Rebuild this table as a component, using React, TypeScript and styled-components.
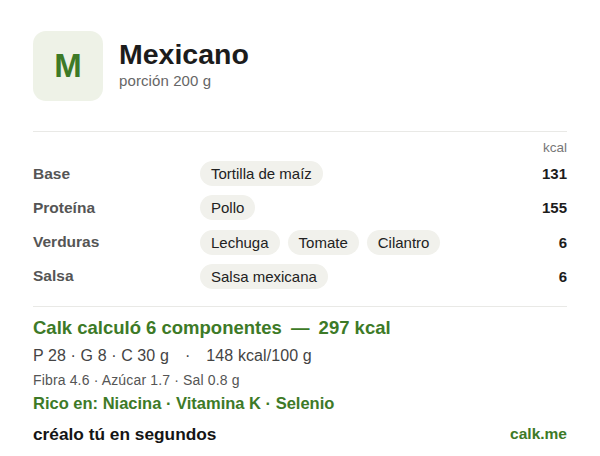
import React from "react";
import styled, { createGlobalStyle } from "styled-components";

const Global = createGlobalStyle`
  html, body { margin: 0; padding: 0; background: #ffffff; }
  body { font-family: "Liberation Sans", Arial, sans-serif; }
`;

const Card = styled.div`
  width: 600px;
  box-sizing: border-box;
  padding: 31px 33px 0 33px;
  background: #fff;
`;

const Header = styled.div`
  display: flex;
  align-items: flex-start;
  gap: 16px;
`;

const Logo = styled.div`
  width: 70px;
  height: 70px;
  border-radius: 13px;
  background: #eef2e7;
  color: #3d7a27;
  font-weight: 700;
  font-size: 33px;
  display: flex;
  align-items: center;
  justify-content: center;
`;

const TitleBlock = styled.div`
  display: flex;
  flex-direction: column;
  padding-top: 7px;
`;

const Title = styled.div`
  font-size: 28.5px;
  font-weight: 700;
  color: #1c1c1c;
  line-height: 32px;
`;

const Subtitle = styled.div`
  font-size: 15px;
  color: #666;
  line-height: 20px;
  margin-top: 1px;
  letter-spacing: 0.1px;
`;

const Divider = styled.div<{ $top: number; $bottom: number }>`
  height: 1px;
  background: #e9e9e6;
  margin-top: ${(p) => p.$top}px;
  margin-bottom: ${(p) => p.$bottom}px;
`;

const KcalHead = styled.div`
  text-align: right;
  font-size: 13.5px;
  color: #777;
  line-height: 16px;
`;

const Table = styled.div`
  display: flex;
  flex-direction: column;
  gap: 10.3px;
  margin-top: 5px;
`;

const Row = styled.div`
  display: grid;
  grid-template-columns: 167px 1fr auto;
  align-items: center;
  height: 24px;
`;

const Label = styled.div`
  font-size: 15.5px;
  font-weight: 700;
  color: #555;
`;

const Chips = styled.div`
  display: flex;
  gap: 8px;
`;

const Chip = styled.span`
  background: #f1f1ec;
  border-radius: 13px;
  padding: 0 11px;
  height: 25px;
  line-height: 25px;
  font-size: 15px;
  color: #222;
`;

const Kcal = styled.div`
  font-size: 15px;
  font-weight: 700;
  color: #1c1c1c;
  text-align: right;
`;

const Summary = styled.div`
  font-size: 18.5px;
  font-weight: 700;
  color: #3d7a27;
  line-height: 22px;
`;

const Dash = styled.span`
  margin: 0 4px;
`;

const Macros = styled.div`
  font-size: 16px;
  color: #444;
  line-height: 20px;
  margin-top: 7px;
  letter-spacing: 0.1px;
`;

const Sep = styled.span`
  margin: 0 16px;
`;

const Micro = styled.div`
  font-size: 14px;
  color: #555;
  line-height: 18px;
  margin-top: 5px;
  letter-spacing: 0.15px;
`;

const Rich = styled.div`
  font-size: 16.5px;
  font-weight: 700;
  color: #3d7a27;
  line-height: 20px;
  margin-top: 4px;
`;

const Footer = styled.div`
  display: flex;
  justify-content: space-between;
  align-items: center;
  margin-top: 10px;
  line-height: 22px;
`;

const Cta = styled.div`
  font-size: 17.3px;
  font-weight: 700;
  color: #151515;
`;

const Brand = styled.div`
  font-size: 15.5px;
  font-weight: 700;
  color: #3d7a27;
`;

const rows = [
  { label: "Base", items: ["Tortilla de maíz"], kcal: 131 },
  { label: "Proteína", items: ["Pollo"], kcal: 155 },
  { label: "Verduras", items: ["Lechuga", "Tomate", "Cilantro"], kcal: 6 },
  { label: "Salsa", items: ["Salsa mexicana"], kcal: 6 },
];

export default function App() {
  return (
    <>
      <Global />
      <Card>
        <Header>
          <Logo>M</Logo>
          <TitleBlock>
            <Title>Mexicano</Title>
            <Subtitle>porción 200 g</Subtitle>
          </TitleBlock>
        </Header>
        <Divider $top={30} $bottom={8} />
        <KcalHead>kcal</KcalHead>
        <Table>
          {rows.map((r) => (
            <Row key={r.label}>
              <Label>{r.label}</Label>
              <Chips>
                {r.items.map((i) => (
                  <Chip key={i}>{i}</Chip>
                ))}
              </Chips>
              <Kcal>{r.kcal}</Kcal>
            </Row>
          ))}
        </Table>
        <Divider $top={18} $bottom={10} />
        <Summary>
          Calk calculó 6 componentes <Dash>—</Dash> 297 kcal
        </Summary>
        <Macros>
          P 28 · G 8 · C 30 g<Sep>·</Sep>148 kcal/100 g
        </Macros>
        <Micro>Fibra 4.6 · Azúcar 1.7 · Sal 0.8 g</Micro>
        <Rich>Rico en: Niacina · Vitamina K · Selenio</Rich>
        <Footer>
          <Cta>créalo tú en segundos</Cta>
          <Brand>calk.me</Brand>
        </Footer>
      </Card>
    </>
  );
}
